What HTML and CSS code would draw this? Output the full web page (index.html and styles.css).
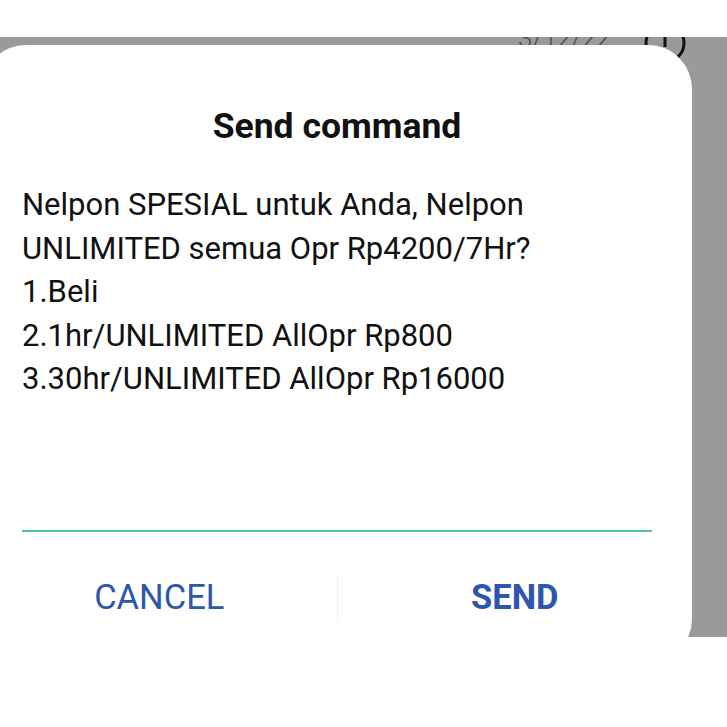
FILE: index.html
```html
<!DOCTYPE html>
<html lang="id">
<head>
    <meta charset="UTF-8">
    <meta name="viewport" content="width=device-width, initial-scale=1.0">
    <title>Send command</title>
    <link rel="stylesheet" href="styles.css">
</head>
<body>
    <div class="top-space"></div>
    <div class="scrim">
        <div class="under">
            <span class="under-date">3/12/22</span>
            <svg class="under-icon" width="44" height="44" viewBox="0 0 44 44">
                <circle cx="22" cy="22" r="19" fill="none" stroke="#111" stroke-width="3"/>
                <line x1="22" y1="12" x2="22" y2="26" stroke="#111" stroke-width="3"/>
            </svg>
        </div>
        <div class="dialog">
            <h1 class="dialog-title">Send command</h1>
            <p class="dialog-message">
                <span>Nelpon SPESIAL untuk Anda, Nelpon</span>
                <span>UNLIMITED semua Opr Rp4200/7Hr?</span>
                <span>1.Beli</span>
                <span>2.1hr/UNLIMITED AllOpr Rp800</span>
                <span>3.30hr/UNLIMITED AllOpr Rp16000</span>
            </p>
            <input class="dialog-input" type="text">
            <div class="dialog-actions">
                <button type="button" class="btn">CANCEL</button>
                <span class="btn-divider"></span>
                <button type="button" class="btn btn-send">SEND</button>
            </div>
        </div>
    </div>
</body>
</html>
```

FILE: styles.css
```css
body {
    margin: 0;
    padding: 0;
    background-color: #fff;
    font-family: Roboto, "Noto Sans", sans-serif;
    overflow: hidden;
}

.top-space {
    height: 37px;
}

.scrim {
    position: relative;
    height: 600px;
    background-color: #9a9a9a;
    overflow: hidden;
}

/* what's left of the page under the dim layer */
.under {
    position: absolute;
    top: -26px;
    left: 518px;
    display: flex;
    align-items: center;
    gap: 32px;
}

.under-date {
    font-size: 26px;
    font-weight: 300;
    color: #4a4a4a;
}

.under-icon {
    margin-top: 10px;
}

.dialog {
    position: relative;
    margin-top: 8px;
    margin-left: -18px;
    width: 710px;
    height: 618px;
    box-sizing: border-box;
    padding: 0 40px;
    background-color: #fff;
    border-radius: 44px;
}

.dialog-title {
    margin: 0;
    padding-top: 61px;
    font-size: 35.5px;
    line-height: 40px;
    font-weight: 700;
    text-align: center;
    color: #111;
}

.dialog-message {
    margin: 37px 0 0;
    font-size: 31px;
    line-height: 43.5px;
    color: #111;
}

.dialog-message span {
    display: block;
    white-space: nowrap;
}

.dialog-input {
    display: block;
    width: 100%;
    height: 40px;
    margin-top: 89px;
    padding: 0;
    border: none;
    border-bottom: 2px solid #4cc39a;
    outline: none;
    background: transparent;
}

.dialog-actions {
    display: flex;
    align-items: center;
    margin: 33px -40px 0;
    height: 64px;
}

.btn {
    flex: 1;
    height: 64px;
    padding: 0;
    border: none;
    background: none;
    font-family: Roboto, "Noto Sans", sans-serif;
    font-size: 34.5px;
    color: #2d56ad;
}

.btn-send {
    font-weight: 700;
}

.btn-divider {
    width: 1px;
    height: 48px;
    background-color: #f0f0f0;
}
```
